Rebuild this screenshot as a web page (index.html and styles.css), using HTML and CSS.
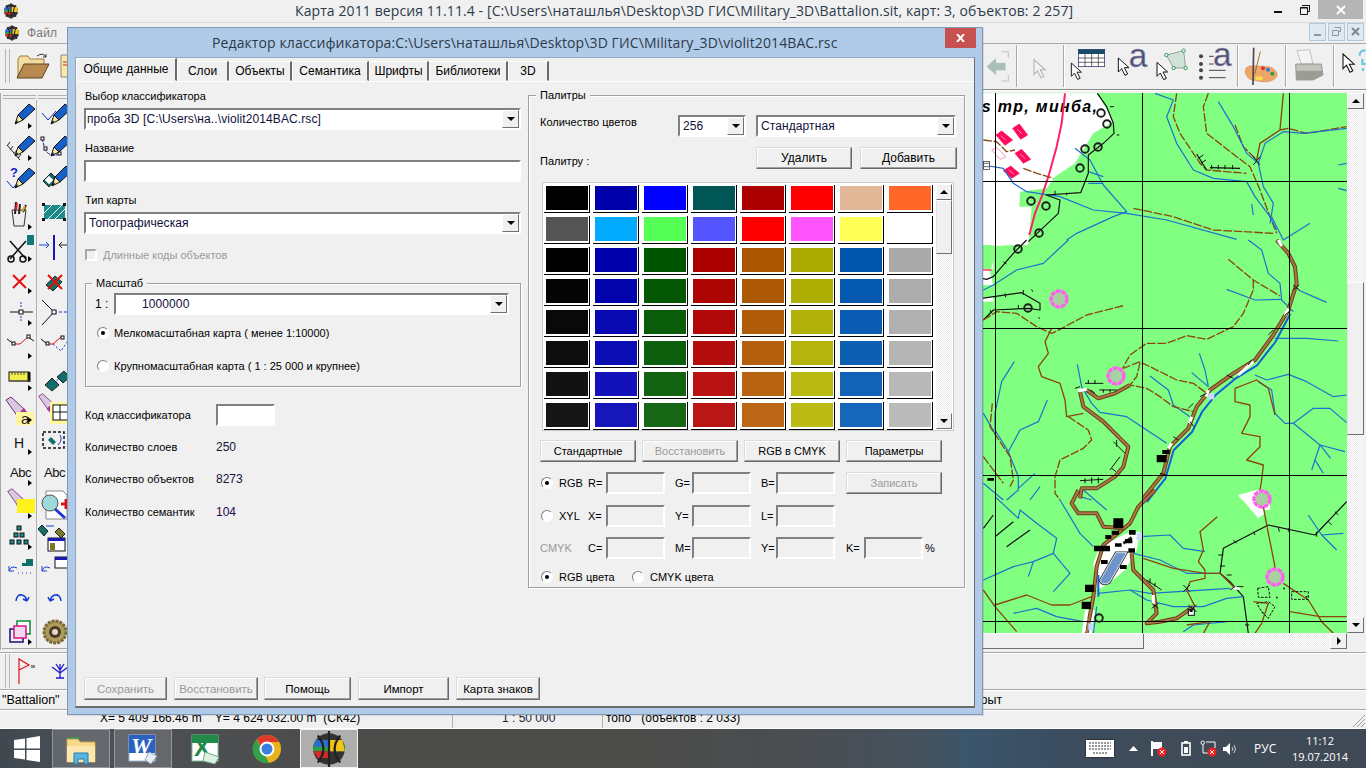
FILE: index.html
```html
<!DOCTYPE html>
<html lang="ru">
<head>
<meta charset="utf-8">
<title>Карта 2011</title>
<link rel="stylesheet" href="styles.css">
</head>
<body>
<svg class="defs" width="0" height="0" aria-hidden="true">
  <defs>
    <path id="cur" d="M0 0V42L10 32 20 52 28 48 18 29H32Z" fill="#fff" stroke="#111" stroke-width="3"/>
    <g id="appicon">
      <circle cx="8" cy="8" r="7" fill="#333"/>
      <path d="M1 6h14v3H1z" fill="#2f9e44"/><path d="M1 9h7v3H3z" fill="#d62828"/><path d="M8 4h6l1 5H8z" fill="#f0c419"/><path d="M2 4h6v3H1z" fill="#2a6fd0"/>
      <path d="M8 0V16M3 2Q8 8 3 14M13 2Q8 8 13 14" stroke="#222" fill="none"/>
    </g>
    <g id="pencil"><path d="M27 4 33 9 21 20 16 15Z" fill="#1560c8" stroke="#111"/><path d="M16 15 21 20 13 24Z" fill="#f5e6a8" stroke="#111"/><path d="M13 24 15 20 16 22Z" fill="#111"/></g>
    <g id="bars"><path d="M0 8 8 0 14 6 6 14Z" fill="#0f6b68" stroke="#222"/></g>
    <g id="torch"><path d="M2 4 7 1 20 13 14 21Z" fill="#d8c8e0" stroke="#7a2a7a"/><path d="M12 20 20 12 23 16 16 24Z" fill="#b03090"/></g>
    <g id="pink"><circle r="7" fill="#a8d0a0"/><circle r="8" fill="none" stroke="#ff60f0" stroke-width="3.4" stroke-dasharray="5 .7"/></g>
    <g id="ring"><circle r="3.8" fill="none" stroke="#1c1c1c" stroke-width="1.9"/></g>
  </defs>
</svg>

<div class="screen">
  <main class="mainwin">
    <header class="titlebar">
      <svg class="appicon" width="16" height="16" viewBox="0 0 16 16"><use href="#appicon"/></svg>
      <span class="apptitle">Карта 2011 версия 11.11.4 - [C:\Users\наташлья\Desktop\3D ГИС\Military_3D\Battalion.sit, карт: 3, объектов: 2 257]</span>
      <div class="winctl">
        <span class="wbtn"><i class="min-g"></i></span>
        <span class="wbtn"><svg width="10" height="10" viewBox="0 0 10 10"><path d="M2.5 .5h7v6h-2M.5 2.5h7v7h-7z" fill="none" stroke="#111"/><path d="M2 .5h8M0 3h8" stroke="#111"/></svg></span>
        <span class="wbtn close"><svg width="10" height="10" viewBox="0 0 10 10"><path d="M1 1 9 9M9 1 1 9" stroke="#fff" stroke-width="2"/></svg></span>
      </div>
    </header>

    <nav class="menubar">
      <svg class="menuicon" width="16" height="16" viewBox="0 0 16 16"><use href="#appicon"/></svg>
      <span class="menuitem">Файл</span>
      <div class="mdictl">
        <span class="mdibtn"><i class="mdimin"></i></span>
        <span class="mdibtn"><svg width="9" height="9" viewBox="0 0 9 9"><path d="M2.5 .5h6v4h-2M.5 3.5h6v5h-6z" fill="none" stroke="#8a96a3"/></svg></span>
        <span class="mdibtn"><svg width="9" height="9" viewBox="0 0 9 9"><path d="M1 1 8 8M8 1 1 8" stroke="#7a8794" stroke-width="2"/></svg></span>
      </div>
    </nav>

    <div class="toolbar">
      <span class="grip"></span>
      <svg class="t-folder" width="34" height="28" viewBox="0 0 34 28">
        <path d="M2 25V7l2-3h8l2 3h14v5" fill="#f3dca0" stroke="#a07c3c"/>
        <path d="M1 26 8 12H33L26 26Z" fill="#b88a50" stroke="#5c4020"/>
        <path d="M21 4q6-4 9 1M30 5l-3 0M30 5v-3" fill="none" stroke="#333"/>
      </svg>
      <svg class="t-doc" width="10" height="24" viewBox="0 0 10 24"><path d="M1 1h9v22H1z" fill="#fbe8a0" stroke="#888"/><path d="M3 8h7M3 11h5" stroke="#c22"/></svg>
      <span class="toolgap"></span>
      <svg class="tb" width="33" height="46" viewBox="69 132 99 138">
        <path d="M80 203 108 178V192H136V214H108V228Z" fill="#a8c0b8" stroke="#bcc4cc"/>
        <path d="M125 158H145V176M145 228V246H125" fill="none" stroke="#c0c4c8" stroke-width="3"/>
      </svg>
      <i class="tsep"></i>
      <svg class="tb" width="46" height="46" viewBox="171 132 138 138"><use href="#cur" transform="translate(222 182) scale(1.05)" opacity=".28"/></svg>
      <i class="tsep"></i>
      <svg class="tb" width="41" height="46" viewBox="313 132 123 138">
        <rect x="356" y="151" width="79" height="52" fill="#fff" stroke="#1a1a60" stroke-width="2"/>
        <rect x="356" y="151" width="79" height="14" fill="#164a66"/>
        <path d="M356 177H435M356 190H435M376 165V203M396 165V203M416 165V203" stroke="#222" stroke-width="2"/>
        <use href="#cur" transform="translate(335 192) scale(.95)"/>
      </svg>
      <svg class="tb" width="44" height="46" viewBox="436 132 132 138">
        <use href="#cur" transform="translate(476 177) scale(1)"/>
        <text x="507" y="203" class="biga">a</text>
      </svg>
      <svg class="tb" width="41" height="46" viewBox="568 132 123 138">
        <path d="M620 168 672 155 678 207 642 207Z" fill="#cfe3d6" stroke="#777" stroke-width="2"/>
        <g fill="#fff" stroke="#0a8a3a" stroke-width="2.5"><circle cx="620" cy="168" r="5"/><circle cx="672" cy="155" r="5"/><circle cx="678" cy="207" r="5"/><circle cx="642" cy="207" r="5"/></g>
        <use href="#cur" transform="translate(592 190) scale(1)"/>
      </svg>
      <svg class="tb" width="47" height="46" viewBox="691 132 141 138">
        <g fill="#444"><circle cx="724" cy="172" r="6"/><circle cx="724" cy="195" r="6"/><circle cx="724" cy="214" r="6"/><circle cx="724" cy="236" r="6"/></g>
        <path d="M748 172H762M748 195H762M748 214H798M748 236H798" stroke="#444" stroke-width="3"/>
        <text x="760" y="200" class="biga">a</text>
      </svg>
      <i class="tsep"></i>
      <svg class="tb" width="47" height="46" viewBox="835 132 141 138">
        <path d="M858 225Q850 200 880 200T935 205Q965 225 945 240T890 245Q865 245 858 225Z" fill="#efa668" stroke="#a8683a"/>
        <path d="M882 146 880 258" stroke="#4a4a4a" stroke-width="5"/>
        <path d="M902 158 885 226" stroke="#a07030" stroke-width="3"/>
        <circle cx="910" cy="208" r="6" fill="#d33"/><circle cx="925" cy="212" r="6" fill="#2a7fd0"/><circle cx="938" cy="224" r="6" fill="#2a9e40"/><ellipse cx="898" cy="238" rx="11" ry="6" fill="#f5e050"/>
      </svg>
      <i class="tsep"></i>
      <svg class="tb" width="47" height="46" viewBox="979 132 141 138">
        <path d="M1012 155 1050 152 1060 195H1025Z" fill="#f4f4f4" stroke="#aaa" stroke-width="2"/>
        <path d="M1008 195H1085L1090 228 1060 243H1010Z" fill="#c4c4bc" stroke="#777" stroke-width="2"/>
        <path d="M1010 215H1088V228L1060 243H1010Z" fill="#9c9c94"/>
      </svg>
      <i class="tsep"></i>
      <svg class="tb" width="32" height="46" viewBox="1123 132 96 138">
        <use href="#cur" transform="translate(1150 165) scale(1.05)"/>
        <path d="M1200 170Q1200 152 1218 155M1218 195 1208 195V180" fill="none" stroke="#62c4e0" stroke-width="6"/><circle cx="1210" cy="212" r="4" fill="#62c4e0"/>
      </svg>
    </div>

    <div class="workspace">
      <aside class="lefttools">
        <div class="toolgrid">
          <i class="toolhead"></i><i class="toolhead"></i>
          <span class="tool more"><svg width="34" height="32"><use href="#pencil"/></svg></span>
          <span class="tool"><svg width="34" height="32"><path d="M5 13 11 20 19 11" fill="none" stroke="#0a2acc"/><use href="#pencil" transform="translate(1)"/></svg></span>
          <span class="tool more"><svg width="34" height="32"><path d="M5 13 18 28M8 10l-3 4M11 14l-3 4M15 18l-3 4M19 22l-3 4" stroke="#222" fill="none"/><use href="#pencil"/></svg></span>
          <span class="tool"><svg width="34" height="32"><path d="M5 6 8 18Q14 26 22 22" fill="none" stroke="#1a1aa8" stroke-dasharray="4 1"/><rect x="4" y="5" width="3" height="3" fill="#fff" stroke="#111"/><rect x="7" y="15" width="3" height="3" fill="#fff" stroke="#111"/><rect x="21" y="20" width="3" height="3" fill="#fff" stroke="#111"/><use href="#pencil" transform="translate(1)"/></svg></span>
          <span class="tool"><svg width="34" height="32"><text x="8" y="13" class="qm">?</text><path d="M5 17 11 24 19 15" fill="none" stroke="#0a2acc"/><use href="#pencil"/></svg></span>
          <span class="tool"><svg width="34" height="32"><g transform="translate(6 9)"><use href="#bars"/></g><rect x="9" y="13" width="6" height="6" fill="#fff" transform="rotate(45 12 16)"/><use href="#pencil" transform="translate(2 -2)"/></svg></span>

          <span class="tool more"><svg width="34" height="32"><path d="M10 12H24L22 28H12Z" fill="#eee" stroke="#333"/><path d="M13 16 14 4M17 16 18 6M21 14 24 7" stroke="#222" stroke-width="2"/><path d="M14 12 15 5" stroke="#d22" stroke-width="2"/><path d="M20 14 23 8" stroke="#e0a020" stroke-width="2"/></svg></span>
          <span class="tool"><svg width="34" height="32"><rect x="7" y="7" width="21" height="14" fill="#1b8a88"/><path d="M7 15 15 7M11 21 25 7M18 21 28 11" stroke="#fff"/><g fill="#111"><rect x="5" y="5" width="3" height="3"/><rect x="26" y="5" width="3" height="3"/><rect x="5" y="20" width="3" height="3"/><rect x="26" y="20" width="3" height="3"/></g></svg></span>
          <span class="tool more"><svg width="34" height="32"><path d="M8 8 24 26M24 8 8 26" stroke="#111" stroke-width="1.5"/><circle cx="9" cy="26" r="3" fill="none" stroke="#111" stroke-width="1.5"/><circle cx="21" cy="26" r="3" fill="none" stroke="#111" stroke-width="1.5"/><rect x="25" y="2" width="7" height="10" fill="#0f7a78"/></svg></span>
          <span class="tool"><svg width="34" height="32"><path d="M17 2V27" stroke="#1a1ab0" stroke-width="2"/><path d="M2 12H12M9 9l3 3-3 3" fill="none" stroke="#1a4ad0"/><path d="M30 12H22M25 9l-3 3 3 3" fill="none" stroke="#222"/></svg></span>
          <span class="tool more"><svg width="34" height="32"><path d="M11 10 24 23M24 10 11 23" stroke="#e81010" stroke-width="2"/></svg></span>
          <span class="tool"><svg width="34" height="32"><path d="M9 20 18 11 25 17 16 26Z" fill="#0f7068" stroke="#222"/><path d="M11 10 25 24M25 10 11 24" stroke="#e01010" stroke-width="2"/></svg></span>
          <span class="tool more"><svg width="34" height="32"><path d="M8 15H31" stroke="#111"/><rect x="17" y="13" width="4" height="4" fill="#fff" stroke="#111"/><path d="M19 5V11M19 19V25" stroke="#1a3ad0" stroke-dasharray="2 1"/></svg></span>
          <span class="tool"><svg width="34" height="32"><path d="M5 3 17 15 5 28M17 15" fill="none" stroke="#111"/><path d="M17 15H31" stroke="#1a3ad0" stroke-dasharray="3 2"/><rect x="15" y="13" width="4" height="4" fill="#fff" stroke="#111"/></svg></span>
          <span class="tool more"><svg width="34" height="32"><path d="M5 10 12 15" stroke="#111"/><path d="M12 15H18L26 8" stroke="#e01010" fill="none"/><path d="M26 8 32 12" stroke="#111"/><rect x="10" y="13" width="3" height="3" fill="#fff" stroke="#111"/><rect x="25" y="6" width="3" height="3" fill="#fff" stroke="#111"/></svg></span>
          <span class="tool"><svg width="34" height="32"><path d="M4 10 10 15" stroke="#111"/><path d="M10 15H16L24 8" stroke="#e01010" fill="none"/><path d="M16 15 24 22 30 13" stroke="#1a3ad0" stroke-dasharray="2 2" fill="none"/><rect x="9" y="13" width="3" height="3" fill="#fff" stroke="#111"/><rect x="24" y="7" width="3" height="3" fill="#fff" stroke="#111"/></svg></span>
          <span class="tool more"><svg width="34" height="32"><rect x="7" y="10" width="20" height="9" fill="#f2ee4a" stroke="#111"/><path d="M27 10v10" stroke="#111" stroke-width="3"/><path d="M10 10v3M13 10v3M16 10v3M19 10v3M22 10v3M7 19h21" stroke="#555"/></svg></span>
          <span class="tool"><svg width="34" height="32"><path d="M8 23 15 16 22 23 15 29Z" fill="#0f7068" stroke="#222"/><path d="M20 15 27 9 33 15 26 21Z" fill="#0f7068" stroke="#222"/><path d="M16 23 24 14" stroke="#1a3ad0" stroke-dasharray="2 1"/></svg></span>

          <span class="tool more"><svg width="34" height="32"><use href="#torch" transform="translate(2 2)"/><rect x="14" y="18" width="18" height="13" fill="#fff6a0"/><text x="19" y="30" class="smalla">a</text></svg></span>
          <span class="tool"><svg width="34" height="32"><use href="#torch" transform="translate(0 -1) scale(.8)"/><rect x="13" y="8" width="20" height="22" fill="#fff6a0"/><rect x="16" y="11" width="15" height="15" fill="#fff" stroke="#111"/><path d="M16 18H31M23 11V26" stroke="#111"/></svg></span>
          <span class="tool more"><svg width="34" height="32"><text x="12" y="22" class="hh">H</text></svg></span>
          <span class="tool"><svg width="34" height="32"><rect x="6" y="6" width="21" height="16" fill="none" stroke="#111" stroke-dasharray="3 2" stroke-width="1.5"/><path d="M14 11 19 16 16 19 11 14Z" fill="#0f7068"/><path d="M23 9Q26 14 21 19" stroke="#1a3ad0" fill="none"/></svg></span>
          <span class="tool more"><svg width="34" height="32"><text x="8" y="19" class="abc">Abc</text></svg></span>
          <span class="tool"><svg width="34" height="32"><text x="7" y="19" class="abc">Abc</text></svg></span>
          <span class="tool more"><svg width="34" height="32"><use href="#torch" transform="translate(4 -1) scale(.85)"/><rect x="15" y="10" width="18" height="14" fill="#fff21a"/></svg></span>
          <span class="tool"><svg width="34" height="32"><path d="M9 2H26L30 6V30H9Z" fill="#fff" stroke="#888"/><circle cx="13" cy="14" r="8" fill="#9ed8d8" stroke="#555"/><path d="M18 20 28 29" stroke="#1a3ad0" stroke-width="3"/><path d="M24 15H34M29 10V20" stroke="#e01010" stroke-width="3"/></svg></span>
          <span class="tool more"><svg width="34" height="32"><g fill="#1b9090" stroke="#111"><rect x="15" y="4" width="4" height="4"/><rect x="12" y="11" width="4" height="4"/><rect x="18" y="11" width="4" height="4"/><rect x="8" y="18" width="4" height="4"/><rect x="15" y="18" width="4" height="4"/><rect x="22" y="18" width="4" height="4"/></g></svg></span>
          <span class="tool"><svg width="34" height="32"><path d="M5 3 11 9 7 14 1 7Z" fill="#0f7068" stroke="#222"/><path d="M22 6 28 12 24 16 18 10Z" fill="#7a7a20" stroke="#222"/><path d="M9 4H17" stroke="#1a3ad0"/><rect x="11" y="16" width="17" height="13" fill="#fff" stroke="#111"/><rect x="11" y="16" width="17" height="3" fill="#1a1ab0"/><rect x="13" y="21" width="5" height="7" fill="#7a7a20"/></svg></span>
          <span class="tool"><svg width="34" height="32"><path d="M7 18Q9 12 15 15M7 18V13M7 18H12M16 20h1M20 20h1M24 20h1M28 20h1" fill="none" stroke="#1a3ad0"/><path d="M20 10H24V6H31V13H20Z" fill="#0f7068"/></svg></span>
          <span class="tool"><svg width="34" height="32"><path d="M5 18Q7 12 13 15M5 18V13M5 18H10" fill="none" stroke="#1a3ad0"/><rect x="18" y="4" width="15" height="11" fill="#fff" stroke="#111"/><rect x="18" y="4" width="15" height="3" fill="#1a1ab0"/></svg></span>
          <span class="tool"><svg width="34" height="32"><path d="M14 17Q15 10 20 11 24 12 25 17M25 17 21 15M25 17 27 13" fill="none" stroke="#1a3ad0" stroke-width="1.5"/></svg></span>
          <span class="tool"><svg width="34" height="32"><path d="M24 17Q23 10 18 11 14 12 13 17M13 17 17 15M13 17 11 13" fill="none" stroke="#1a3ad0" stroke-width="1.5"/></svg></span>
          <span class="tool more"><svg width="34" height="32"><rect x="15" y="5" width="13" height="13" fill="#fff" stroke="#0a8a3a" stroke-width="1.5"/><rect x="8" y="13" width="13" height="13" fill="none" stroke="#12127a" stroke-width="1.5"/><rect x="12" y="10" width="12" height="12" fill="#f4d8ec" stroke="#d8108a" stroke-width="1.5"/></svg></span>
          <span class="tool"><svg width="34" height="32"><circle cx="18" cy="16" r="11" fill="#b09a5a" stroke="#7a6a3a" stroke-width="3" stroke-dasharray="3 1"/><circle cx="18" cy="16" r="6" fill="#4a3a2a"/><circle cx="18" cy="16" r="3" fill="#e8d8c0"/></svg></span>
        </div>
      </aside>

      <div class="mapcol">
        <div class="maprow">
          <svg class="map" width="1271" height="540" viewBox="76 93 1271 540">
            <rect x="76" y="93" width="1271" height="540" fill="#80ff80"/>

            <g transform="translate(960 0) scale(.33333)">
              <path class="white" d="M-60 280H412L460 365 400 400 345 490 285 530 260 565 180 575 178 620 215 620 205 735H-60Z"/>
              <text x="415" y="336" class="maptext" text-anchor="end">s тр, минба,</text>
              <polyline class="road-pink" points="315,280 305,370 290,440 265,530 245,590 225,640 208,705"/>
              <path class="dia" d="M108 405 125 393 158 420 135 436Z"/><path class="dia" d="M158 385 178 372 203 405 182 418Z"/><path class="dia" d="M165 460 185 448 212 478 190 490Z"/><path class="dia" d="M130 512 152 498 178 520 155 535Z"/>
              <path d="M122 407 137 420M172 388 186 402M180 462 196 476M146 510 162 522" stroke="#ff8ab0" stroke-width="3"/>
              <path d="M95 450 110 443 138 470 120 478Z" fill="none" stroke="#ff5a90" stroke-width="2"/>

              <polyline class="brn" points="70,420 110,425 140,455 165,450"/>
              <polyline class="brn" points="190,505 230,520 280,535"/>
              <polyline class="brn" points="650,280 640,350 660,400 720,490 740,510 860,520"/>
              <polyline class="brn" points="745,280 730,320 740,400 830,470 870,500 900,570 930,650 950,700"/>
              <polyline class="brn" points="825,375 850,440 890,480"/>
              <polyline class="brs" points="970,280 960,390 900,430 890,480"/>
              <polyline class="brn" points="960,390 985,385 1040,400 1160,380"/>
              <polyline class="brn" points="520,625 640,650 760,690 940,700"/>

              <polyline class="riv" points="585,280 640,300 620,350 650,430 700,510 760,535 860,545 885,590 930,650 950,690"/>
              <polyline class="riv" points="775,305 820,380 860,460 895,490 910,560 940,610 930,670"/>
              <polyline class="riv" points="1160,385 1030,400 970,395 915,430 895,490"/>
              <polyline class="riv" points="345,445 390,480 430,555 500,635 460,650 350,700 320,720"/>
              <polyline class="riv" points="70,495 130,505 160,550 200,575 300,590 400,630 500,640 620,660 830,718"/>
              <polyline class="riv" points="385,550 430,550"/><polyline class="riv" points="385,515 430,530"/>
              <polyline class="riv" points="1135,495 1160,490"/><polyline class="riv" points="1135,565 1160,572"/>
              <polyline class="riv" points="875,612 880,645" /><polyline class="riv" points="935,650 970,720 1050,670" />

              <polyline class="blk" points="412,280 440,320 460,370 462,400 430,430 385,465 385,520 362,578 258,585 300,600 295,640 205,725"/>
              <polyline class="blk" points="710,462 740,510"/><polyline class="blk" points="750,503 840,505"/>
              <path class="tick" d="M715 475 730 465M722 490 738 480M755 495V508M775 495V508M795 495V508M818 495V508M285 572V586M320 578V586M880 470 900 495M900 470 880 495M450 320H462M470 405H478"/>
              <g transform="scale(3)"><use href="#ring" x="141" y="113"/><use href="#ring" x="147" y="124"/><use href="#ring" x="125" y="149"/><use href="#ring" x="138" y="147"/><use href="#ring" x="120" y="168"/><use href="#ring" x="71" y="201"/><use href="#ring" x="86" y="206"/><use href="#ring" x="79" y="233"/></g>
              <rect x="70" y="485" width="18" height="24" fill="#fff" stroke="#222" stroke-width="2"/>
              <path d="M70 490H88M70 500H88" stroke="#222" stroke-width="2"/>
            </g>

            <g transform="translate(960 240) scale(.33333)">
              <path class="white" d="M60 0H170V14L110 18 60 10Z"/>
              <path class="white" d="M60 88H100V65L90 95 100 135H60Z"/>
              <path class="white" d="M60 173H100V185H60Z"/>
              <path d="M65 90H95" stroke="#ff2060" stroke-width="4"/>
              <path d="M835 768 895 750 930 780V810H880Z" class="white"/>
              <polyline class="blk" points="200,0 160,40 100,110 80,118 65,115"/>
              <polyline class="blk" points="65,175 185,158 240,190 240,210 205,205 100,210 70,240"/>
              <path class="tick" d="M135 160 137 172M190 150 190 165M215 148 218 155M235 232 240 236M175 195V205M90 210 95 220M130 65 140 72"/>

              <polyline class="riv" points="865,0 905,30 925,100 960,130 965,180 1000,215"/>
              <polyline class="riv" points="800,148 885,180 965,178"/>
              <polyline class="riv" points="1015,150 1060,170 1100,187"/>
              <polyline class="riv" points="945,295 1040,295 1135,303"/>
              <polyline class="riv" points="885,405 920,420 985,403 1040,425 1120,470 1160,465"/>
              <polyline class="riv" points="895,425 935,450 945,520 975,550 1000,550 1060,505 1110,505 1160,548"/>
              <polyline class="riv" points="1000,550 1080,615 1055,690"/><polyline class="riv" points="1080,615 1112,655"/><polyline class="riv" points="1080,615 1155,635"/><polyline class="riv" points="1065,660 1090,700"/>
              <polyline class="riv" points="352,373 365,440 395,490 420,517 500,530 620,610"/>
              <polyline class="riv" points="718,340 735,390 745,440"/><polyline class="riv" points="695,398 745,440"/><polyline class="riv" points="570,408 625,450 640,495 690,530"/>
              <polyline class="riv" points="325,0 250,70 170,90 100,135 70,150"/>
              <polyline class="riv" points="163,365 125,425 105,520 105,570 145,635 175,710 175,750 140,780"/>
              <polyline class="riv" points="262,480 235,545 180,570 145,635"/>
              <polyline class="riv" points="70,520 105,580"/><polyline class="riv" points="225,700 175,745"/><polyline class="riv" points="240,740 210,780"/><polyline class="riv" points="70,730 130,780"/>
              <polyline class="riv" points="360,770 395,780"/>

              <polyline class="brn" points="805,58 880,120 960,168"/>
              <polyline class="brn" points="880,120 880,150 850,220 820,260 740,298 680,287 620,310 560,310 510,345 488,385"/>
              <polyline class="brn" points="540,365 490,385"/>
              <polyline class="brn" points="545,368 600,395 650,420 700,430 740,460"/>
              <polyline class="brn" points="540,368 530,410 510,435 560,445 600,470 640,500 700,515"/>
              <polyline class="brn" points="70,240 110,215 170,220 230,260 275,280 300,268 380,225 490,197"/>
              <polyline class="brs" points="275,265 255,305 265,340 235,380 245,410 300,430 315,480 320,530 370,520"/>
              <polyline class="brn" points="325,530 385,570 395,600 370,625 300,660 285,710 285,760 300,780"/>
              <polyline class="brs" points="825,445 890,420 925,445 945,525"/>
              <polyline class="brs" points="825,445 825,485 870,495 870,530 845,580 900,590 900,620 860,660 910,675 905,720 900,750"/>
              <polyline class="brn" points="97,490 90,560 150,650 160,720 150,740"/>
              <polyline class="brn" points="70,650 130,730"/>

              <polyline class="riverbig" transform="translate(6 6)" points="985,215 940,300 885,370 820,410 760,460 720,510 690,570 635,625 610,710 570,760 555,780"/>
              <polyline class="road1" points="950,0 985,40 1005,80 1010,130 985,210 940,285 885,360 820,400 750,450 710,500 685,565 630,620 610,700 550,775"/>
              <polyline class="road2" points="950,0 985,40 1005,80 1010,130 985,210 940,285 885,360 820,400 750,450 710,500 685,565 630,620 610,700 550,775"/>
              <polyline class="road1" points="360,455 370,500 430,545 480,595 505,620 490,680 465,710 410,745 365,745 360,775"/>
              <polyline class="road2" points="360,455 370,500 430,545 480,595 505,620 490,680 465,710 410,745 365,745 360,775"/>
              <polyline class="road1" points="380,450 415,475 465,460 510,435"/>
              <polyline class="road2" points="380,450 415,475 465,460 510,435"/>
              <path class="bridge" d="M955 0 965 18M985 205 975 225M880 365 835 405M745 450 738 470M695 530 688 550M635 610 625 625M380 448 355 452"/>
              <path class="lblue" d="M745 460h18v18h-18z"/>
              <path class="tick" d="M1000 135 1018 150M1018 135 1000 150M975 225 992 212M940 270 925 285M875 360 865 375M800 405 820 415M740 460 720 470M700 490 685 505M690 545 702 560M640 590 655 600M600 700 620 705M360 440 345 445M392 450 405 460M375 430H430M385 420V432M405 420V432M418 450H470M430 448V458M450 448V458M460 605 495 640M470 600V620M450 690 480 650M455 685 468 695M360 722 430 718M375 715V730M395 712V730M415 712V730"/>
              <path d="M590 645h30v22h-30zM607 630h22v12h-22zM82 714h20v8H82z" fill="#000"/>
              <g transform="scale(3)"><use href="#ring" x="58" y="9"/><use href="#ring" x="68" y="68"/><use href="#pink" x="99" y="59"/><use href="#pink" x="156" y="136"/></g>
            </g>

            <g transform="translate(960 490) scale(.33333)">
              <path class="white" d="M835 15 890 0 915 70 895 85Z"/>
              <path class="white" d="M500 130 540 125 530 180 495 240 440 285 410 300 400 220 420 170 460 150Z"/>
              <path class="white" d="M375 360H405L395 430H365Z"/>
              <polyline class="blk" points="1160,35 1065,135 925,105 790,175 780,250 810,275 850,320 865,430"/>
              <path class="tick" d="M1105 95 1115 105M1070 125V140M1125 65 1135 75M985 115V125M955 113 958 125M880 125 885 135M820 150 830 160M775 195H790M780 228H795M800 255H815M855 405H868"/>
              <polyline class="blk" points="70,115 100,75"/><polyline class="blk" points="140,170 210,120"/><polyline class="blk" points="105,140 160,95"/>
              <polyline class="riv" points="105,20 175,85 180,60 230,100 290,145 280,190 220,215 160,230 70,270"/>
              <polyline class="riv" points="220,215 205,260"/><polyline class="riv" points="280,190 330,250 280,305"/>
              <polyline class="riv" points="300,30 360,130 400,170"/>
              <polyline class="riv" points="370,0 440,60"/>
              <polyline class="riv" points="540,140 630,135 670,175 735,185"/>
              <polyline class="riv" points="520,190 600,210 680,250 780,250"/>
              <polyline class="riv" points="415,310 510,300 570,310 810,295"/><polyline class="riv" points="510,300 560,330 640,350 730,350 800,325 850,320"/>
              <polyline class="riv" points="160,370 230,355 290,380 370,395"/>
              <polyline class="riv" points="670,425 700,405 800,395"/>
              <polyline class="riv" points="1045,75 1085,135 1130,180"/><polyline class="riv" points="1085,135 1150,130"/>
              <polyline class="riv" points="400,430 410,350"/>
              <polyline class="brs" points="70,300 105,350 170,425"/>
              <polyline class="brs" points="105,345 200,315 275,345 330,345 395,320"/>
              <polyline class="brs" points="772,80 720,125 730,180 715,215 735,240 735,265 690,275 680,300 705,350"/>
              <polyline class="brs" points="910,50 925,130 945,230 940,250"/>
              <polyline class="brs" points="550,205 640,235 735,250 780,250 830,300"/>
              <polyline class="brs" points="970,280 1045,330 1085,395 1120,430"/>
              <polyline class="brs" points="990,365 1080,380 1160,380"/>
              <polyline class="brs" points="880,335 925,340 905,400 885,430"/>
              <polyline class="brs" points="680,405 750,395 730,430"/>
              <polyline class="road1" points="585,0 535,50 510,100 430,165 410,230 400,320 380,430"/>
              <polyline class="road2" points="585,0 535,50 510,100 430,165 410,230 400,320 380,430"/>
              <polyline class="road1" points="355,0 335,40 355,70 410,70 430,110 490,115"/>
              <polyline class="road2" points="355,0 335,40 355,70 410,70 430,110 490,115"/>
              <polyline class="road1" points="515,190 520,240 580,300 590,370 560,400 600,395 650,385 700,350"/>
              <polyline class="road2" points="515,190 520,240 580,300 590,370 560,400 600,395 650,385 700,350"/>
              <polyline class="riverbig" points="415,255 415,320"/>
              <polyline class="bridge" points="378,385 372,425"/>
              <path class="bridge" d="M580 315V342M820 295H840"/>
              <path d="M420 272 468 188H500L448 278Q428 288 420 272Z" fill="#6f94cc" stroke="#222" stroke-width="7"/>
              <path d="M420 272 468 188H500L448 278Q428 288 420 272Z" fill="#6f94cc" stroke="#fff" stroke-width="2.5"/>
              <path d="M490 160 515 142" stroke="#222" stroke-width="8"/>
              <path d="M460 85h30v30h-30zM507 120h20v14h-20zM495 147h22v13h-22zM402 167h48v17h-48zM465 160h20v10h-20zM505 175h20v13h-20zM423 210h20v12h-20zM480 225h20v12h-20zM375 284h28v22h-28zM365 335h28v22h-28zM436 135h18v12h-18zM455 122h22v12h-22z" fill="#000"/>
              <path class="lblue" d="M530 128h20v22h-20zM385 400h15v22h-15z"/>
              <rect x="685" y="358" width="18" height="18" fill="#fff" stroke="#111" stroke-width="3"/><rect x="690" y="358" width="8" height="8" fill="#111"/>
              <path class="tick" d="M670 285 690 305M690 285 670 305M685 345 710 365M710 345 685 365M575 340 595 355M595 340 575 355M560 270 605 300M570 265V280M585 278V290M830 290H850M810 300 825 290"/>
              <path class="dash" d="M893 295 925 290 930 322H895ZM890 340 925 335 945 350 925 385 905 365ZM995 305H1045V328H995Z"/>
              <path d="M948 320h5v5h-5zM970 293h5v5h-5zM1037 318h5v5h-5zM905 365h5v5h-5z" fill="#111"/>
              <g transform="scale(3)"><use href="#ring" x="139" y="128"/><use href="#pink" x="302" y="9"/><use href="#pink" x="315" y="87"/></g>
            </g>

            <g class="grid"><path d="M995.5 93V633M1142.5 93V633M1289.5 93V633M76 181.5H1347M76 328.5H1347M76 475.5H1347M76 621.5H1347"/></g>
          </svg>
          <div class="vscroll">
            <span class="sbtn"><i class="up"></i></span>
            <span class="strack"><i class="vthumb"></i></span>
            <span class="sbtn"><i class="down"></i></span>
          </div>
        </div>
        <div class="hscroll">
          <span class="hthumb"></span>
          <span class="hbtn"><i class="right"></i></span>
          <span class="corner"></span>
        </div>
      </div>
    </div>

    <div class="flagbar">
      <span class="grip"></span>
      <svg class="flag" width="20" height="30" viewBox="0 0 20 30"><path d="M3 2V28M3 3 13 9 3 14" fill="none" stroke="#e01010" stroke-width="1.2"/><path d="M16 9v3M18 9v3" stroke="#222"/></svg>
      <svg class="antenna" width="18" height="18" viewBox="0 0 18 18"><path d="M9 2V16M5 16H13M1 5 9 11 17 5M5 2 9 8 13 2" fill="none" stroke="#1a1ad0" stroke-width="1.3"/></svg>
    </div>
    <div class="namebar"><span class="battalion">"Battalion"</span><span class="otkryt">рыт</span></div>
    <div class="statusbar">
      <span class="st st1">X= 5 409 166.46 m &nbsp;&nbsp; Y= 4 624 032.00 m &nbsp;(СК42)</span>
      <span class="st st2">1 : 50 000</span>
      <span class="st st3">топо &nbsp; (объектов : 2 033)</span>
      <svg class="sizegrip" width="12" height="12" viewBox="0 0 12 12"><path d="M12 0 0 12M12 4 4 12M12 8 8 12" stroke="#a0a0a0"/></svg>
    </div>
  </main>

  <footer class="taskbar">
    <span class="startbtn"><svg width="26" height="26" viewBox="0 0 26 26"><path d="M0 4 11 2.4V12.4H0ZM12.5 2.2 26 0V12.4H12.5ZM0 13.9H11V23.6L0 22ZM12.5 13.9H26V26L12.5 24Z" fill="#fff"/></svg></span>
    <span class="task run"><svg width="34" height="32" viewBox="0 0 34 32"><path d="M3 6H14L16 9H31V29H3Z" fill="#f6d98a" stroke="#c9a54e"/><path d="M3 13H31V29H3Z" fill="#fbe8b0"/><path d="M10 20H24V31H20V26H14V31H10Z" fill="#58b4e0" stroke="#2a7ca8"/><path d="M7 5h3M12 5h3" stroke="#2aa84a" stroke-width="2"/></svg></span>
    <span class="task run"><svg width="32" height="32" viewBox="0 0 32 32"><rect x="2" y="2" width="26" height="26" fill="#fff" stroke="#9db8d8"/><rect x="2" y="2" width="26" height="18" fill="#2a62c0"/><text x="4" y="21" class="wordw">W</text><path d="M22 19 30 23 24 31 18 27Z" fill="#e8eef6" stroke="#8aa4c4"/></svg></span>
    <span class="task"><svg width="32" height="32" viewBox="0 0 32 32"><rect x="3" y="2" width="26" height="26" fill="#fff" stroke="#7cc098"/><rect x="3" y="2" width="26" height="8" fill="#1f8a4a"/><text x="5" y="23" class="excelx">X</text><path d="M16 19 30 24 26 31 14 28Z" fill="#dff0e4" stroke="#6aa883"/></svg></span>
    <span class="task"><svg width="30" height="30" viewBox="0 0 30 30"><circle cx="15" cy="15" r="14" fill="#e8b31a"/><path d="M15 1A14 14 0 0 1 27 8H15A7 7 0 0 0 8.5 12L5 5A14 14 0 0 1 15 1Z" fill="#dd3a2c"/><path d="M4.5 5.5 11 17 17 29A14 14 0 0 1 4.5 5.5Z" fill="#33a04a"/><circle cx="15" cy="15" r="6.5" fill="#3a7fdc" stroke="#fff" stroke-width="2"/></svg></span>
    <span class="task active"><svg width="36" height="36" viewBox="0 0 16 16"><use href="#appicon"/></svg></span>
    <span class="traygap"></span>
    <div class="tray">
      <svg class="kbd" width="30" height="19" viewBox="0 0 30 19"><rect x=".5" y=".5" width="29" height="18" rx="1" fill="#fff" stroke="#333"/><path d="M4 4h22M4 7h22M4 10h22M8 14h14" stroke="#333" stroke-dasharray="2 1"/></svg>
      <svg class="caret" width="9" height="5" viewBox="0 0 9 5"><path d="M0 5 4.5 0 9 5Z" fill="#fff"/></svg>
      <svg class="ti1" width="17" height="17" viewBox="0 0 17 17"><path d="M2 1V16" stroke="#fff" stroke-width="2"/><path d="M3 2H12V9H3Z" fill="#fff"/><circle cx="12" cy="12" r="4.5" fill="#e22"/><path d="M10 10 14 14M14 10 10 14" stroke="#fff"/></svg>
      <svg class="ti2" width="10" height="15" viewBox="0 0 10 15"><rect x="1" y="2" width="8" height="12" fill="none" stroke="#fff" stroke-width="1.6"/><rect x="3" y="0" width="4" height="2" fill="#fff"/><rect x="3" y="6" width="4" height="6" fill="#fff"/></svg>
      <svg class="ti3" width="18" height="17" viewBox="0 0 18 17"><rect x="1" y="1" width="3.5" height="3.5" rx="1.7" fill="none" stroke="#fff"/><path d="M3 5V13H8M6 2H15V8" fill="none" stroke="#fff"/><circle cx="12" cy="12" r="4.5" fill="#e22"/><path d="M10 10 14 14M14 10 10 14" stroke="#fff"/></svg>
      <svg class="ti4" width="16" height="14" viewBox="0 0 16 14"><path d="M1 5H4L8 1V13L4 9H1Z" fill="#fff"/><path d="M10 5Q12 7 10 9M12 3Q15 7 12 11" stroke="#ccc" fill="none"/></svg>
      <span class="lang">РУС</span>
      <div class="clock"><span>11:12</span><span>19.07.2014</span></div>
    </div>
  </footer>

  <section class="dialog">
    <div class="dlg-title">
      <span class="dlg-caption">Редактор классификатора:C:\Users\наташлья\Desktop\3D ГИС\Military_3D\violit2014BAC.rsc</span>
      <span class="dlg-close"><svg width="9" height="8" viewBox="0 0 9 8"><path d="M1 0 8 8M8 0 1 8" stroke="#fff" stroke-width="2"/></svg></span>
    </div>
    <div class="dlg-client">
      <div class="tabs">
        <span class="tab active t1">Общие данные</span>
        <span class="tab t2">Слои</span>
        <span class="tab t3">Объекты</span>
        <span class="tab t4">Семантика</span>
        <span class="tab t5">Шрифты</span>
        <span class="tab t6">Библиотеки</span>
        <span class="tab t7">3D</span>
      </div>
      <div class="page">
        <div class="leftcol">
          <div class="lbl m-a">Выбор классификатора</div>
          <div class="combo wide m-b"><span class="cval small-pad">проба 3D [C:\Users\на..\violit2014BAC.rsc]</span><span class="cbtn"><i class="down"></i></span></div>
          <div class="lbl m-c">Название</div>
          <div class="field wide m-b"></div>
          <div class="lbl m-c">Тип карты</div>
          <div class="combo wide m-b"><span class="cval">Топографическая</span><span class="cbtn"><i class="down"></i></span></div>
          <label class="check dis"><i class="box"></i>Длинные коды объектов</label>
          <div class="group scale">
            <span class="legend">Масштаб</span>
            <div class="scale-row"><span class="one">1 :</span><div class="combo scalecombo"><span class="cval scaleval">1000000</span><span class="cbtn"><i class="down"></i></span></div></div>
            <div class="radio r1"><i class="dot on"></i>Мелкомасштабная карта ( менее 1:10000)</div>
            <div class="radio r2"><i class="dot"></i>Крупномасштабная карта ( 1 : 25 000 и крупнее)</div>
          </div>
          <div class="inforow code"><span class="ilabel">Код классификатора</span><span class="field codefield"></span></div>
          <div class="inforow c1"><span class="ilabel">Количество слоев</span><span class="num">250</span></div>
          <div class="inforow c2"><span class="ilabel">Количество объектов</span><span class="num">8273</span></div>
          <div class="inforow c3"><span class="ilabel">Количество семантик</span><span class="num navy">104</span></div>
        </div>

        <div class="rightcol">
          <div class="group palettes">
            <span class="legend">Палитры</span>
            <div class="prow1">
              <span class="colors-l">Количество цветов</span>
              <div class="combo c256"><span class="cval">256</span><span class="cbtn"><i class="down"></i></span></div>
              <div class="combo cstd"><span class="cval">Стандартная</span><span class="cbtn"><i class="down"></i></span></div>
            </div>
            <div class="prow2">
              <span class="pal-l">Палитру :</span>
              <span class="btn b96">Удалить</span>
              <span class="btn b97">Добавить</span>
            </div>
            <div class="listbox">
              <div class="swatches">
                <i class="cell"><b style="background:#000000"></b></i><i class="cell"><b style="background:#0000aa"></b></i><i class="cell"><b style="background:#0000ff"></b></i><i class="cell"><b style="background:#005555"></b></i><i class="cell"><b style="background:#aa0000"></b></i><i class="cell"><b style="background:#ff0000"></b></i><i class="cell"><b style="background:#e0b898"></b></i><i class="cell"><b style="background:#ff6628"></b></i>
                <i class="cell"><b style="background:#555555"></b></i><i class="cell"><b style="background:#00aaff"></b></i><i class="cell"><b style="background:#55ff55"></b></i><i class="cell"><b style="background:#5555ff"></b></i><i class="cell"><b style="background:#ff0000"></b></i><i class="cell"><b style="background:#ff55ff"></b></i><i class="cell"><b style="background:#ffff55"></b></i><i class="cell"><b style="background:#ffffff"></b></i>
                <i class="cell"><b style="background:#000000"></b></i><i class="cell"><b style="background:#0000aa"></b></i><i class="cell"><b style="background:#005500"></b></i><i class="cell"><b style="background:#aa0000"></b></i><i class="cell"><b style="background:#aa5500"></b></i><i class="cell"><b style="background:#aaaa00"></b></i><i class="cell"><b style="background:#0055aa"></b></i><i class="cell"><b style="background:#aaaaaa"></b></i>
                <i class="cell"><b style="background:#040404"></b></i><i class="cell"><b style="background:#0404ad"></b></i><i class="cell"><b style="background:#045804"></b></i><i class="cell"><b style="background:#ad0404"></b></i><i class="cell"><b style="background:#ad5804"></b></i><i class="cell"><b style="background:#adad04"></b></i><i class="cell"><b style="background:#0458ad"></b></i><i class="cell"><b style="background:#adadad"></b></i>
                <i class="cell"><b style="background:#090909"></b></i><i class="cell"><b style="background:#0909b1"></b></i><i class="cell"><b style="background:#095c09"></b></i><i class="cell"><b style="background:#b10909"></b></i><i class="cell"><b style="background:#b15c09"></b></i><i class="cell"><b style="background:#b1b109"></b></i><i class="cell"><b style="background:#095cb1"></b></i><i class="cell"><b style="background:#b1b1b1"></b></i>
                <i class="cell"><b style="background:#0d0d0d"></b></i><i class="cell"><b style="background:#0d0db4"></b></i><i class="cell"><b style="background:#0d5f0d"></b></i><i class="cell"><b style="background:#b40d0d"></b></i><i class="cell"><b style="background:#b45f0d"></b></i><i class="cell"><b style="background:#b4b40d"></b></i><i class="cell"><b style="background:#0d5fb4"></b></i><i class="cell"><b style="background:#b4b4b4"></b></i>
                <i class="cell"><b style="background:#121212"></b></i><i class="cell"><b style="background:#1212b8"></b></i><i class="cell"><b style="background:#126312"></b></i><i class="cell"><b style="background:#b81212"></b></i><i class="cell"><b style="background:#b86312"></b></i><i class="cell"><b style="background:#b8b812"></b></i><i class="cell"><b style="background:#1263b8"></b></i><i class="cell"><b style="background:#b8b8b8"></b></i>
                <i class="cell"><b style="background:#161616"></b></i><i class="cell"><b style="background:#1616bb"></b></i><i class="cell"><b style="background:#166616"></b></i><i class="cell"><b style="background:#bb1616"></b></i><i class="cell"><b style="background:#bb6616"></b></i><i class="cell"><b style="background:#bbbb16"></b></i><i class="cell"><b style="background:#1666bb"></b></i><i class="cell"><b style="background:#bbbbbb"></b></i>
              </div>
              <div class="lscroll">
                <span class="lbtn"><i class="up"></i></span>
                <span class="ltrack"><i class="lthumb"></i></span>
                <span class="lbtn"><i class="down"></i></span>
              </div>
            </div>
            <div class="prow3">
              <span class="btn b96 sm">Стандартные</span>
              <span class="btn b96 sm off">Восстановить</span>
              <span class="btn b96 sm">RGB в CMYK</span>
              <span class="btn b96 sm">Параметры</span>
            </div>
            <div class="cgrid r-rgb">
              <span class="radio tight"><i class="dot on"></i>RGB</span><span>R=</span><i class="field off"></i><span></span><span>G=</span><i class="field off"></i><span></span><span>B=</span><i class="field off"></i><span></span><span class="btn off b96 sm span3">Записать</span>
            </div>
            <div class="cgrid r-xyl">
              <span class="radio tight"><i class="dot"></i>XYL</span><span>X=</span><i class="field off"></i><span></span><span>Y=</span><i class="field off"></i><span></span><span>L=</span><i class="field off"></i>
            </div>
            <div class="cgrid r-cmyk">
              <span class="grayt">CMYK</span><span>C=</span><i class="field off"></i><span></span><span>M=</span><i class="field off"></i><span></span><span>Y=</span><i class="field off"></i><span></span><span>K=</span><i class="field off"></i><span class="pct">%</span>
            </div>
            <div class="r-mode">
              <span class="radio tight m1"><i class="dot on"></i>RGB цвета</span>
              <span class="radio tight"><i class="dot"></i>CMYK цвета</span>
            </div>
          </div>
        </div>
      </div>
      <div class="dlg-foot">
        <span class="btn off fb1">Сохранить</span>
        <span class="btn off fb2">Восстановить</span>
        <span class="btn fb3">Помощь</span>
        <span class="btn fb4">Импорт</span>
        <span class="btn fb5">Карта знаков</span>
      </div>
    </div>
  </section>
</div>
</body>
</html>
```

FILE: styles.css
```css
* { box-sizing: border-box; }
html, body { margin: 0; padding: 0; }
body { width: 1366px; height: 768px; overflow: hidden; background: #f0f0f0; font: 11px "Liberation Sans", Arial, sans-serif; color: #000; }
i, b { display: block; font-style: normal; }
.defs { position: absolute; }
.screen { position: relative; width: 1366px; height: 768px; display: flex; flex-direction: column; overflow: hidden; }
.mainwin { height: 728px; display: flex; flex-direction: column; background: #f0f0f0; }

.titlebar { height: 23px; display: flex; align-items: center; border-bottom: 1px solid #d8d8d8; position: relative; }
.appicon { margin-left: 3px; }
.apptitle { margin-left: 276px; font: 14px "Open Sans", "Noto Sans", sans-serif; color: #2c3a4a; white-space: nowrap; letter-spacing: .1px; }
.winctl { margin-left: auto; display: flex; height: 19px; align-self: flex-start; margin-right: 3px; }
.wbtn { width: 27px; height: 19px; display: flex; align-items: center; justify-content: center; }
.wbtn.close { width: 45px; background: #b5b5b5; margin-left: 0; }
.min-g { width: 8px; height: 2px; background: #111; margin-top: 4px; }

.menubar { height: 21px; display: flex; align-items: center; border-bottom: 1px solid #a8a8a8; }
.menuicon { margin-left: 4px; }
.menuitem { margin-left: 7px; color: #7a7a7a; font-size: 12px; letter-spacing: .2px; }
.mdictl { margin-left: auto; display: flex; gap: 2px; margin-right: 2px; margin-top: -2px; }
.mdibtn { width: 17px; height: 18px; background: #dfe9f2; border: 1px solid #aec8de; display: flex; align-items: center; justify-content: center; }
.mdimin { width: 7px; height: 2px; background: #8a96a3; margin-top: 6px; }

.toolbar { height: 46px; display: flex; align-items: center; border-bottom: 1px solid #8a8a8a; box-shadow: 0 1px 0 #fff; background: #f0f0f0; }
.grip { width: 5px; height: 34px; margin-left: 5px; border-left: 1px solid #b8b8b8; border-right: 1px solid #b8b8b8; flex: none; }
.t-folder { margin-left: 6px; flex: none; }
.t-doc { margin-left: 10px; flex: none; }
.toolgap { width: 913px; flex: none; }
.tb { flex: none; display: block; overflow: visible; }
.tsep { width: 1px; height: 42px; background: #a8a8a8; box-shadow: 1px 0 0 #fff; flex: none; }
.biga { font: 100px/1 "Liberation Sans", sans-serif; fill: #50506e; stroke: #a8a8cc; stroke-width: 1.5; }
.qm { font: bold 13px "Liberation Sans", sans-serif; fill: #1a1ad0; }
.smalla { font: 15px "Liberation Sans", sans-serif; fill: #222; }
.hh { font: 14px "Liberation Sans", sans-serif; fill: #111; }
.abc { font: 13px "Liberation Sans", sans-serif; fill: #111; letter-spacing: -.5px; }

.workspace { height: 562px; display: flex; margin-top: 1px; }
.lefttools { width: 76px; flex: none; border-left: 1px solid #a8a8a8; padding-left: 1px; margin-top: 2px; }
.toolgrid { display: grid; grid-template-columns: 35px 35px; grid-template-rows: 7px 32px 32px 34px 35px 32px 32px 32px 33px 32px 32px 32px 31px 33px 31px 31px 32px 32px; border-bottom: 1px solid #a8a8a8; }
.toolhead { border-top: 1px solid #b0b0b0; border-bottom: 1px solid #b0b0b0; height: 4px; margin: 2px 1px 0; }
.tool { position: relative; display: block; border-right: 1px solid #b0b0b0; height: 100%; }
.tool:nth-child(even) { border-right: 0; }
.tool svg { display: block; overflow: visible; }
.tool.more::after { content: ""; position: absolute; right: 4px; bottom: 3px; border-left: 4px solid #000; border-top: 3px solid transparent; border-bottom: 3px solid transparent; }

.mapcol { flex: 1; display: flex; flex-direction: column; min-width: 0; margin-top: 2px; }
.maprow { display: flex; height: 540px; }
.map { display: block; flex: none; }
.white { fill: #fff; }
.riv { fill: none; stroke: #1f70cf; stroke-width: 3.6; stroke-linejoin: round; }
.brn { fill: none; stroke: #8a4510; stroke-width: 4; stroke-dasharray: 26 5; stroke-linejoin: round; }
.brs { fill: none; stroke: #8a4510; stroke-width: 4; stroke-linejoin: round; }
.blk { fill: none; stroke: #111; stroke-width: 3.6; stroke-linejoin: round; }
.tick { fill: none; stroke: #111; stroke-width: 3; }
.road-pink { fill: none; stroke: #ff2068; stroke-width: 6; stroke-linejoin: round; }
.dia { fill: #ff0a5a; stroke: #ff0a5a; stroke-width: 2; }
.road1 { fill: none; stroke: #6e3c14; stroke-width: 12; stroke-linejoin: round; }
.road2 { fill: none; stroke: #a87848; stroke-width: 6; stroke-linejoin: round; }
.riverbig { fill: none; stroke: #1060d8; stroke-width: 6; stroke-linejoin: round; }
.bridge { fill: none; stroke: #fff; stroke-width: 9; }
.lblue { fill: #c8d8ff; }
.dash { fill: none; stroke: #111; stroke-width: 3; stroke-dasharray: 8 4; }
.maptext { font: italic bold 48px "Liberation Sans", sans-serif; fill: #000; letter-spacing: 4px; }
.grid path { stroke: #000; stroke-width: 1; fill: none; shape-rendering: crispEdges; }

.vscroll { width: 19px; display: flex; flex-direction: column; padding-right: 2px; }
.sbtn, .lbtn, .hbtn { display: flex; align-items: center; justify-content: center; background: #f0f0f0; border: 1px solid; border-color: #fff #707070 #707070 #fff; flex: none; }
.sbtn { height: 16px; }
.strack { flex: 1; position: relative; background: repeating-conic-gradient(#fff 0 25%, #e8e8e8 0 50%) 0 0 / 2px 2px; padding-top: 173px; }
.vthumb { height: 153px; background: #f0f0f0; border: 1px solid; border-color: #fff #707070 #707070 #e0e0e0; }
.up, .down, .right { width: 0; height: 0; border: 0 solid transparent; }
.up { border-width: 0 4px 4px; border-bottom-color: #000; }
.down { border-width: 4px 4px 0; border-top-color: #000; }
.right { border-width: 4px 0 4px 4px; border-left-color: #000; }
.hscroll { height: 16px; display: flex; background: repeating-conic-gradient(#fff 0 25%, #e8e8e8 0 50%) 0 0 / 2px 2px; }
.hthumb { width: 1068px; background: #f0f0f0; border: 1px solid; border-color: #fff #707070 #707070 #fff; flex: none; }
.hbtn { width: 17px; height: 16px; margin-left: auto; }
.corner { width: 19px; background: #f0f0f0; flex: none; }

.flagbar { height: 38px; display: flex; align-items: center; border-top: 1px solid #a8a8a8; border-bottom: 1px solid #a8a8a8; box-shadow: inset 0 1px 0 #fff, 0 1px 0 #fff; margin-top: 2px; }
.flag { margin-left: 6px; flex: none; }
.antenna { margin-left: 15px; flex: none; }
.namebar { height: 19px; margin-top: 1px; border-bottom: 1px solid #a8a8a8; box-shadow: 0 1px 0 #fff; display: flex; align-items: center; font-size: 12.5px; }
.battalion { margin-left: 2px; }
.otkryt { margin-left: 921px; }
.statusbar { flex: 1; display: flex; align-items: flex-end; position: relative; font-size: 12px; margin-top: 1px; }
.st { height: 17px; line-height: 15px; display: block; white-space: nowrap; }
.st1 { margin-left: 100px; width: 353px; border-right: 1px solid #b0b0b0; }
.st2 { width: 150px; padding-left: 49px; border-right: 1px solid #b0b0b0; color: #24243c; }
.st3 { padding-left: 3px; }
.sizegrip { position: absolute; right: 1px; bottom: 1px; }

.taskbar { height: 40px; flex: none; display: flex; align-items: stretch; background: linear-gradient(90deg, #3f4850 0, #4c5058 6%, #4c4c4a 24%, #4c4b48 45%, #4a4e52 58%, #45525f 68%, #3a566c 71%, #3b4e62 76%, #3f4b58 85%, #3f4956 100%); border-top: 1px solid #fff; }
.startbtn { width: 52px; display: flex; align-items: center; justify-content: center; padding-left: 1px; }
.task { width: 58px; margin-right: 4px; display: flex; align-items: center; justify-content: center; border: 1px solid transparent; }
.task.run { background: rgba(255, 255, 255, .14); border-color: rgba(255, 255, 255, .32); }
.task.active { background: rgba(255, 255, 255, .55); border-color: rgba(255, 255, 255, .85); }
.wordw { font: bold italic 23px "Liberation Serif", serif; fill: #fff; }
.excelx { font: bold 24px "Liberation Sans", sans-serif; fill: #1f8a4a; }
.traygap { flex: 1; }
.tray { display: flex; align-items: center; color: #fff; }
.kbd { margin-right: 14px; }
.caret { margin-right: 12px; }
.ti1 { margin-right: 14px; }
.ti2 { margin-right: 9px; }
.ti3 { margin-right: 4px; }
.ti4 { margin-right: 16px; }
.lang { font: 12px "Open Sans", sans-serif; margin-right: 8px; width: 22px; white-space: nowrap; }
.clock { width: 72px; margin-right: 10px; display: flex; flex-direction: column; align-items: center; font: 11px/16px "Open Sans", sans-serif; }

.dialog { position: absolute; left: 67px; top: 27px; width: 916px; height: 688px; background: #b0cbe8; border: 1px solid #7f98b4; display: flex; flex-direction: column; padding: 0 7px 6px; box-shadow: 1px 1px 0 rgba(0,0,0,.1); }
.dlg-title { height: 29px; display: flex; align-items: center; position: relative; }
.dlg-caption { margin-left: 137px; font: 14px "Open Sans", "Noto Sans", sans-serif; color: #2c3a4a; white-space: nowrap; letter-spacing: .1px; }
.dlg-close { position: absolute; right: -1px; top: 0; width: 31px; height: 20px; background: #c75050; display: flex; align-items: center; justify-content: center; }
.dlg-client { flex: 1; background: #f0f0f0; border: 1px solid #8ea8c4; border-right-color: #6c6c6c; border-bottom: 2px solid #6c6c6c; display: flex; flex-direction: column; }

.tabs { height: 23px; display: flex; align-items: flex-end; flex: none; font-size: 12px; }
.tab { height: 20px; line-height: 19px; text-align: center; border: 1px solid; border-color: #fff #6a6a6a transparent #fff; border-right-width: 2px; white-space: nowrap; }
.tab.active { height: 23px; line-height: 21px; }
.t1 { width: 101px; }
.t2 { width: 52px; }
.t3 { width: 63px; }
.t4 { width: 77px; }
.t5 { width: 60px; }
.t6 { width: 79px; }
.t7 { width: 41px; }
.page { flex: 1; display: flex; border-top: 1px solid #fff; padding-left: 8px; gap: 7px; }

.leftcol { width: 437px; flex: none; display: flex; flex-direction: column; }
.lbl { line-height: 14px; margin-left: 1px; }
.m-a { margin-top: 7px; }
.m-b { margin-top: 5px; }
.m-c { margin-top: 11px; }
.field { display: block; height: 22px; background: #fff; border: 2px solid; border-color: #808080 #fff #fff #808080; }
.field.off { background: #f0f0f0; height: 22px; width: 59px; }
.wide { width: 437px; }
.combo { height: 22px; display: flex; background: #fff; border: 2px solid; border-color: #808080 #fff #fff #808080; flex: none; }
.cval { flex: 1; font-size: 12px; line-height: 19px; padding-left: 3px; color: #10103a; white-space: nowrap; letter-spacing: .1px; }
.small-pad { padding-left: 1px; }
.cbtn { width: 17px; height: 18px; background: #f0f0f0; border: 1px solid; border-color: #fff #707070 #707070 #fff; display: flex; align-items: center; justify-content: center; flex: none; }

.check { display: flex; align-items: center; margin-top: 14px; height: 14px; margin-left: 1px; gap: 6px; color: #9a9a9a; }
.box { width: 12px; height: 12px; border: 2px solid; border-color: #a8a8a8 #fff #fff #a8a8a8; }

.group { position: relative; border: 1px solid #a0a0a0; box-shadow: 1px 1px 0 #fff, inset 1px 1px 0 #fff; }
.legend { position: absolute; left: 7px; top: -8px; line-height: 14px; background: #f0f0f0; padding: 0 4px; }
.scale .legend { left: 6px; }
.scale { margin-top: 21px; margin-left: 1px; height: 104px; width: 436px; }
.scale-row { display: flex; align-items: center; margin-top: 9px; margin-left: 9px; }
.one { width: 19px; font-size: 12px; }
.scalecombo { width: 395px; }
.scaleval { padding-left: 26px; }
.radio { display: flex; align-items: center; white-space: nowrap; }
.dot { width: 12px; height: 12px; border-radius: 50%; background: #fff; border: 1px solid; border-color: #808080 #fff #fff #808080; position: relative; flex: none; }
.dot.on::after { content: ""; position: absolute; left: 3px; top: 3px; width: 4px; height: 4px; border-radius: 50%; background: #000; }
.r1 { margin: 11px 0 0 11px; gap: 5px; line-height: 14px; }
.r2 { margin: 19px 0 0 11px; gap: 5px; line-height: 14px; }
.inforow { display: flex; align-items: center; margin-left: 1px; line-height: 14px; }
.ilabel { width: 131px; flex: none; }
.code { margin-top: 17px; }
.codefield { width: 59px; }
.c1 { margin-top: 14px; }
.c2 { margin-top: 18px; }
.c3 { margin-top: 19px; }
.num { color: #14143c; font-size: 12px; }
.navy { color: #1a0a50; }

.rightcol { flex: 1; padding-top: 13px; }
.palettes { width: 437px; height: 493px; padding: 0 0 0 11px; }
.prow1 { display: flex; align-items: center; margin-top: 19px; }
.colors-l { width: 138px; margin-top: -9px; }
.c256 { width: 68px; }
.cstd { width: 200px; margin-left: 10px; }
.prow2 { display: flex; align-items: center; margin-top: 10px; height: 22px; }
.pal-l { width: 216px; margin-top: 6px; }
.btn { display: flex; align-items: center; justify-content: center; height: 22px; font-size: 12px; background: #f0f0f0; border: 1px solid; border-color: #dcdcdc #696969 #696969 #dcdcdc; box-shadow: inset -1px -1px 0 #a0a0a0, inset 1px 1px 0 #fff; flex: none; white-space: nowrap; }
.btn.sm { font-size: 11px; }
.btn.off { color: #9a9a9a; }
.b96 { width: 96px; }
.b97 { width: 97px; margin-left: 8px; }
.listbox { margin-top: 13px; margin-left: 2px; width: 412px; height: 249px; display: flex; background: #fff; border: 1px solid #c8c8c8; padding: 1px; }
.swatches { display: grid; grid-template-columns: repeat(8, 49px); grid-auto-rows: 31px; width: 392px; flex: none; }
.cell { width: 46px; height: 28px; border-right: 1px solid #000; border-bottom: 1px solid #000; padding: 1px; margin-top: 1px; }
.cell b { width: 42px; height: 24px; margin: 0 0 0 1px; }
.lscroll { width: 17px; display: flex; flex-direction: column; }
.lbtn { height: 16px; }
.ltrack { flex: 1; background: repeating-conic-gradient(#fff 0 25%, #e8e8e8 0 50%) 0 0 / 2px 2px; }
.lthumb { height: 54px; background: #f0f0f0; border: 1px solid; border-color: #fff #707070 #707070 #e0e0e0; }
.prow3 { display: flex; gap: 6px; margin-top: 9px; }
.cgrid { display: grid; grid-template-columns: 48px 18px 59px 10px 17px 59px 10px 15px 59px 11px 18px 59px auto; align-items: center; height: 22px; }
.span3 { grid-column: span 3; }
.r-rgb { margin-top: 10px; }
.r-xyl { margin-top: 11px; }
.r-cmyk { margin-top: 10px; }
.tight { gap: 6px; margin-left: 1px; }
.grayt { color: #9a9a9a; }
.pct { padding-left: 2px; }
.r-mode { display: flex; margin-top: 11px; height: 14px; align-items: center; }
.m1 { width: 90px; flex: none; margin-left: 1px; }

.dlg-foot { height: 29px; flex: none; display: flex; padding-left: 8px; gap: 7px; }
.dlg-foot .btn { height: 23px; font-size: 11.5px; }
.fb1 { width: 83px; }
.fb2 { width: 84px; }
.fb3 { width: 87px; margin-left: -1px; }
.fb4 { width: 91px; }
.fb5 { width: 84px; }
```
